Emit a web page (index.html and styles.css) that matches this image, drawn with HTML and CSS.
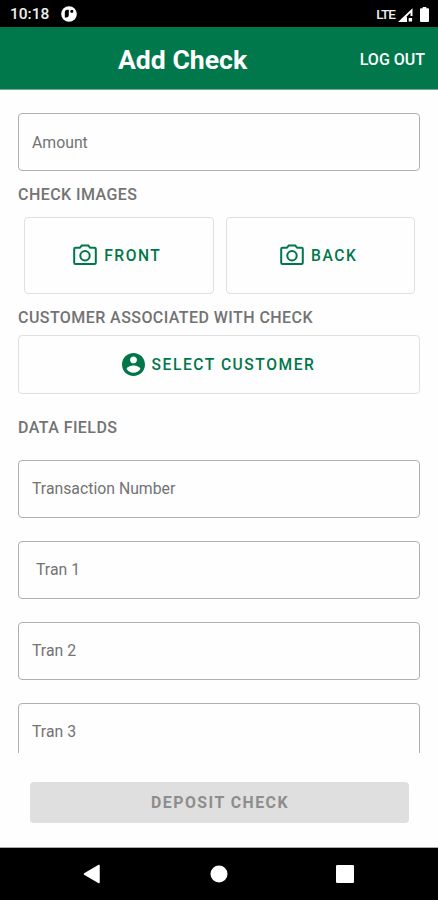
FILE: index.html
```html
<!DOCTYPE html>
<html lang="en">
<head>
<meta charset="utf-8">
<title>Add Check</title>
<link rel="stylesheet" href="styles.css">
</head>
<body>
<div class="status">
  <span class="time">10:18</span>
  <svg class="app-icon" width="16" height="16" viewBox="0 0 16 16"><circle cx="8" cy="8" r="7.8" fill="#fff"/><path d="M3.800 11.500V6.500q0-2.700 2.500-2.700h1.500v5.300q0 2.400-2 2.400z" fill="#000"/><rect x="9.300" y="4" width="3" height="2.800" rx="1" fill="#000"/></svg>
  <span class="lte">LTE</span>
  <svg class="signal" width="15" height="14" viewBox="0 0 15 14"><path d="M0 14 14.500.3V8H9v6z" fill="#fff"/><path d="M8.500 8.700 12.500 4.800V8H8.500z" fill="#000"/><rect x="10.700" y="10" width="3.400" height="3.500" fill="#fff"/></svg>
  <svg class="battery" width="9" height="15" viewBox="0 0 9 15"><path d="M2.700 1.200V0h3.600v1.200H8q1 0 1 1V14q0 1-1 1H1q-1 0-1-1V2.200q0-1 1-1z" fill="#fff"/></svg>
</div>
<header class="bar">
  <h1 class="title">Add Check</h1>
  <span class="logout">LOG OUT</span>
</header>
<main class="form">
  <div class="field amount">Amount</div>
  <h2 class="heading images-heading">CHECK IMAGES</h2>
  <div class="images">
    <div class="outline-btn">
      <svg class="camera" width="24" height="22" viewBox="0 0 24 22"><path d="M2.500 3.800h4.300L8.700 1.500h6.600l1.900 2.300h4.300q1.300 0 1.300 1.300v13.600q0 1.300-1.300 1.300h-19q-1.300 0-1.300-1.300V5.100q0-1.300 1.300-1.300z"/><circle cx="12" cy="11.800" r="4.700"/></svg>
      <span class="front">FRONT</span>
    </div>
    <div class="outline-btn">
      <svg class="camera" width="24" height="22" viewBox="0 0 24 22"><path d="M2.500 3.800h4.300L8.700 1.500h6.600l1.900 2.300h4.300q1.300 0 1.300 1.300v13.600q0 1.300-1.300 1.300h-19q-1.300 0-1.300-1.300V5.100q0-1.300 1.300-1.300z"/><circle cx="12" cy="11.800" r="4.700"/></svg>
      <span class="back">BACK</span>
    </div>
  </div>
  <h2 class="heading customer-heading">CUSTOMER ASSOCIATED WITH CHECK</h2>
  <div class="outline-btn customer">
    <svg width="23" height="23" viewBox="2 2 20 20"><path fill="#00774a" d="M12 2C6.480 2 2 6.480 2 12s4.480 10 10 10 10-4.480 10-10S17.520 2 12 2zm0 3c1.660 0 3 1.340 3 3s-1.340 3-3 3-3-1.340-3-3 1.340-3 3-3zm0 14.200c-2.500 0-4.710-1.280-6-3.220.030-1.990 4-3.080 6-3.080 1.990 0 5.970 1.090 6 3.080-1.290 1.940-3.500 3.220-6 3.220z"/></svg>
    <span class="select">SELECT CUSTOMER</span>
  </div>
  <h2 class="heading data-heading">DATA FIELDS</h2>
  <div class="fields">
    <div class="field number">Transaction Number</div>
    <div class="field indented">Tran 1</div>
    <div class="field">Tran 2</div>
    <div class="field">Tran 3</div>
  </div>
</main>
<footer class="footer"><div class="deposit">DEPOSIT CHECK</div></footer>
<nav class="nav">
  <svg width="18" height="20" viewBox="0 0 18 20"><path d="M1.500 10 16 1.500v17z" fill="#fff" stroke="#fff" stroke-width="1.500" stroke-linejoin="round"/></svg>
  <svg width="18" height="18" viewBox="0 0 18 18"><circle cx="9" cy="9" r="8.500" fill="#fff"/></svg>
  <svg width="18" height="18" viewBox="0 0 18 18"><rect width="18" height="18" rx="1.200" fill="#fff"/></svg>
</nav>
</body>
</html>
```
FILE: styles.css
```css
* { box-sizing: border-box; }
body {
  margin: 0;
  width: 438px;
  height: 900px;
  display: flex;
  flex-direction: column;
  overflow: hidden;
  background: #fefefe;
  color: #737373;
  font-family: Roboto, "Liberation Sans", sans-serif;
  white-space: nowrap;
}
h1, h2 { margin: 0; }
svg { flex: none; display: block; }
.status {
  height: 27px;
  flex: none;
  background: #000;
  color: #eee;
  display: flex;
  align-items: center;
  padding: 1px 8px 0 10px;
}
.time { font-size: 15.5px; font-weight: 500; width: 51px; }
.lte { margin-left: auto; font-size: 13.5px; font-weight: 500; letter-spacing: -0.9px; }
.signal { margin: 1px 7px 0 3px; }
.battery { margin-right: 1px; }
.bar {
  height: 63px;
  flex: none;
  background: #00784b;
  border-bottom: 1px solid #78a990;
  color: #fff;
  display: flex;
  align-items: center;
  justify-content: space-between;
  padding: 2px 13px 0 118px;
}
.title { font-size: 26.6px; font-weight: 700; }
.logout { font-size: 16px; font-weight: 500; }
.form { height: 663px; flex: none; overflow: hidden; padding: 23px 18px 0; }
.field {
  height: 58px;
  border: 1.5px solid #b0b0b0;
  border-radius: 4px;
  padding: 0 13px;
  display: flex;
  align-items: center;
  font-size: 15.8px;
}
.indented { padding-left: 17px; }
.heading { font-size: 16px; font-weight: 500; line-height: 20px; letter-spacing: 0.43px; }
.images-heading { margin-top: 14px; }
.images { margin: 12px 5px 0 6px; display: grid; grid-template-columns: 1fr 1fr; gap: 12px; }
.outline-btn {
  height: 77px;
  border: 1px solid #e0e0e0;
  border-radius: 4px;
  display: flex;
  align-items: center;
  justify-content: center;
  gap: 7px;
  color: #00774a;
  font-size: 15.6px;
  font-weight: 500;
  letter-spacing: 1.55px;
}
.images .outline-btn { padding-right: 3px; }
.camera { fill: none; stroke: #00774a; stroke-width: 2; margin-bottom: 1px; }
.customer-heading { margin-top: 14px; }
.customer { height: 59px; margin-top: 7px; padding-right: 1px; }
.data-heading { margin-top: 24px; }
.fields { display: flex; flex-direction: column; gap: 23px; margin-top: 22px; }
.fields .field { padding-bottom: 1px; }
.footer { height: 95px; flex: none; padding: 29px 29px 0 30px; border-bottom: 1px solid #aaa; }
.deposit {
  height: 41px;
  border-radius: 4px;
  background: #dfdfdf;
  color: #8d8d8d;
  display: flex;
  align-items: center;
  justify-content: center;
  padding-left: 1px;
  font-size: 15.8px;
  font-weight: 700;
  letter-spacing: 1.5px;
}
.nav {
  flex: 1;
  background: #000;
  display: flex;
  align-items: center;
  justify-content: space-between;
  padding: 0 84px 0 83px;
}
```
